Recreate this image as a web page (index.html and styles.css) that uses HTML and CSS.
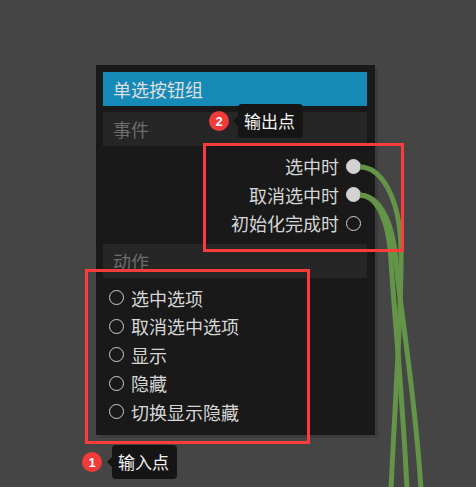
FILE: index.html
```html
<!DOCTYPE html>
<html lang="zh-CN">
<head>
    <meta charset="UTF-8">
    <meta name="viewport" content="width=device-width, initial-scale=1.0">
    <title>单选按钮组</title>
    <link rel="stylesheet" href="styles.css">
</head>
<body>
    <div class="canvas">
        <div class="node">
            <div class="node-title">单选按钮组</div>

            <div class="node-section">事件</div>
            <ul class="ports outputs">
                <li><span>选中时</span><i class="dot on"></i></li>
                <li><span>取消选中时</span><i class="dot on"></i></li>
                <li><span>初始化完成时</span><i class="dot"></i></li>
            </ul>

            <div class="node-section">动作</div>
            <ul class="ports inputs">
                <li><i class="dot"></i><span>选中选项</span></li>
                <li><i class="dot"></i><span>取消选中选项</span></li>
                <li><i class="dot"></i><span>显示</span></li>
                <li><i class="dot"></i><span>隐藏</span></li>
                <li><i class="dot"></i><span>切换显示隐藏</span></li>
            </ul>
        </div>

        <svg class="wires" width="476" height="487" viewBox="0 0 476 487">
            <path d="M360 167 C380 167 400 195 401 250 C402 305 395 400 391 490" />
            <path d="M360 195 C378 196 389 222 391 260 C393 300 403 400 407 490" />
            <path d="M360 195 C380 196 393 222 396 262 C399 300 416 400 421 490" />
        </svg>

        <div class="mark mark-out"></div>
        <div class="mark mark-in"></div>

        <div class="tip tip-out">
            <b class="badge">2</b>
            <span class="bubble">输出点</span>
        </div>
        <div class="tip tip-in">
            <b class="badge">1</b>
            <span class="bubble">输入点</span>
        </div>
    </div>
</body>
</html>
```

FILE: styles.css
```css
* {
    margin: 0;
    padding: 0;
    list-style: none;
    box-sizing: border-box;
}

body {
    background-color: #454545;
    font-family: "Noto Sans CJK SC", "Noto Sans", sans-serif;
    overflow: hidden;
}

.canvas {
    width: 476px;
    height: 487px;
    position: relative;
}

/* node */
.node {
    position: absolute;
    left: 96px;
    top: 65px;
    width: 279px;
    padding: 7px 8px 9px 7px;
    background-color: #191919;
    box-shadow: 3px 3px 0 #3c3c3c;
    display: flex;
    flex-direction: column;
    gap: 6px;
}

.node-title {
    height: 34px;
    background-color: #168ab7;
    color: #dedede;
    font-size: 18px;
    line-height: 34px;
    padding-left: 10px;
}

.node-section {
    height: 34px;
    background-color: #262626;
    color: #6c6c6c;
    font-size: 18px;
    line-height: 34px;
    padding-left: 10px;
}

.ports li {
    height: 28.5px;
    display: flex;
    align-items: center;
    gap: 7px;
    color: #d6d6d6;
    font-size: 18px;
    line-height: 1;
}

.outputs li {
    justify-content: flex-end;
    padding-right: 6px;
}

.inputs li {
    padding-left: 6px;
}

.dot {
    width: 15px;
    height: 15px;
    border-radius: 50%;
    border: 1.5px solid #cfcfcf;
    flex-shrink: 0;
}

.dot.on {
    background-color: #d2d2d2;
    border-color: #d2d2d2;
}

/* wires */
.wires {
    position: absolute;
    left: 0;
    top: 0;
}

.wires path {
    fill: none;
    stroke: #639448;
    stroke-width: 5;
}

/* highlight boxes */
.mark {
    position: absolute;
    border: 3px solid #fc3b3b;
}

.mark-out {
    left: 203px;
    top: 143px;
    width: 201px;
    height: 109px;
}

.mark-in {
    left: 85px;
    top: 269px;
    width: 225px;
    height: 175px;
}

/* tooltips */
.tip {
    position: absolute;
    display: flex;
    align-items: center;
    gap: 9px;
    height: 34px;
}

.tip-out {
    left: 209px;
    top: 104px;
}

.tip-in {
    left: 82px;
    top: 445px;
    gap: 10px;
}

.badge {
    width: 20px;
    height: 20px;
    border-radius: 50%;
    background-color: #f23a3a;
    color: #fff;
    font-family: "Liberation Sans", sans-serif;
    font-size: 13px;
    font-weight: bold;
    display: grid;
    place-items: center;
}

.bubble {
    position: relative;
    height: 34px;
    padding: 0 8px 0 6px;
    background-color: #151515;
    border-radius: 4px;
    color: #f2f2f2;
    font-size: 17px;
    line-height: 34px;
}

.bubble::before {
    content: "";
    position: absolute;
    left: -5px;
    top: 50%;
    transform: translateY(-50%);
    border-top: 5px solid transparent;
    border-bottom: 5px solid transparent;
    border-right: 5px solid #151515;
}
```
